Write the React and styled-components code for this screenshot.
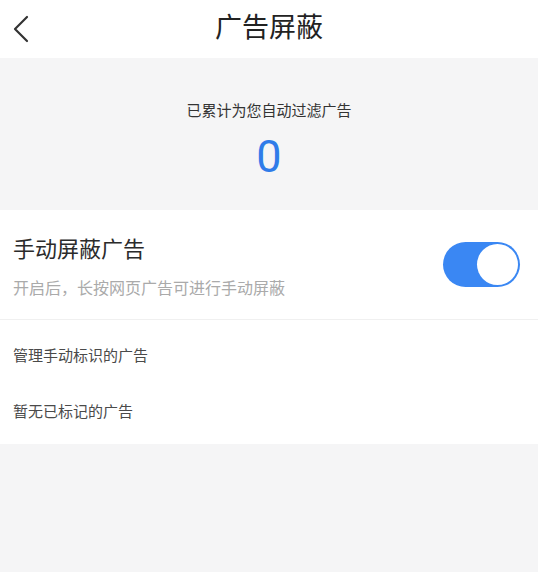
import React, { useState } from 'react'
import styled, { createGlobalStyle } from 'styled-components'

const GlobalStyle = createGlobalStyle`
    html, body {
        margin: 0;
        padding: 0;
        background: #f5f5f6;
    }
    body {
        font-family: "Noto Sans CJK SC", "Noto Sans", sans-serif;
    }
`

function BackIcon() {
    return (
        <svg width="20" height="28" viewBox="0 0 20 28" fill="none">
            <path d="M16 2 L4 14 L16 26" stroke="#333" strokeWidth="2.2" strokeLinecap="round" strokeLinejoin="round" />
        </svg>
    )
}

function Toggle(props) {
    return (
        <Track on={props.on ? 1 : 0} onClick={props.onClick}>
            <Knob on={props.on ? 1 : 0} />
        </Track>
    )
}

export default function App() {
    const [manual, setManual] = useState(true)
    const items = ['管理手动标识的广告', '暂无已标记的广告']
    return (
        <Page>
            <GlobalStyle />
            <Header>
                <BackButton>
                    <BackIcon />
                </BackButton>
                <Title>广告屏蔽</Title>
                <div />
            </Header>
            <Stats>
                <StatsLabel>已累计为您自动过滤广告</StatsLabel>
                <StatsCount>0</StatsCount>
            </Stats>
            <SwitchRow>
                <SwitchText>
                    <SwitchTitle>手动屏蔽广告</SwitchTitle>
                    <SwitchHint>开启后，长按网页广告可进行手动屏蔽</SwitchHint>
                </SwitchText>
                <Toggle on={manual} onClick={() => setManual(!manual)} />
            </SwitchRow>
            <List>
                {items.map((v, i) => (
                    <ListItem key={i}>{v}</ListItem>
                ))}
            </List>
        </Page>
    )
}

const Page = styled.div`
    min-height: 572px;
    background: #f5f5f6;
`

const Header = styled.div`
    display: grid;
    grid-template-columns: 58px 1fr 58px;
    align-items: center;
    height: 58px;
    background: #fff;
`

const BackButton = styled.div`
    display: flex;
    align-items: center;
    padding-left: 11px;
    cursor: pointer;
`

const Title = styled.h1`
    margin: 0;
    text-align: center;
    font-size: 27px;
    font-weight: 400;
    line-height: 34px;
    color: #222;
    padding-bottom: 6px;
`

const Stats = styled.div`
    display: flex;
    flex-direction: column;
    align-items: center;
    height: 152px;
    box-sizing: border-box;
    padding-top: 41px;
    background: #f5f5f6;
`

const StatsLabel = styled.p`
    margin: 0;
    font-size: 15px;
    line-height: 22px;
    color: #333;
`

const StatsCount = styled.div`
    margin-top: 11px;
    font-family: Roboto, "Noto Sans", sans-serif;
    font-size: 45px;
    line-height: 50px;
    color: #2f7ce9;
`

const SwitchRow = styled.div`
    display: flex;
    align-items: center;
    justify-content: space-between;
    height: 110px;
    box-sizing: border-box;
    padding: 0 18px 0 13px;
    background: #fff;
    border-bottom: 1px solid #f0f0f0;
`

const SwitchText = styled.div`
    display: flex;
    flex-direction: column;
    gap: 13px;
    padding-top: 2px;
`

const SwitchTitle = styled.div`
    font-size: 22px;
    line-height: 30px;
    color: #2b2b2b;
`

const SwitchHint = styled.div`
    font-size: 16px;
    line-height: 24px;
    color: #aaa;
`

const Track = styled.div`
    position: relative;
    width: 77px;
    height: 45px;
    border-radius: 23px;
    background: ${(p) => (p.on ? '#3a87f3' : '#e0e0e0')};
    cursor: pointer;
`

const Knob = styled.div`
    position: absolute;
    top: 2px;
    left: ${(p) => (p.on ? '34px' : '2px')};
    width: 41px;
    height: 41px;
    border-radius: 50%;
    background: #fff;
`

const List = styled.div`
    padding: 6px 0;
    background: #fff;
`

const ListItem = styled.div`
    display: flex;
    align-items: center;
    height: 56px;
    padding-left: 13px;
    font-size: 15px;
    color: #4a4a4a;
`
